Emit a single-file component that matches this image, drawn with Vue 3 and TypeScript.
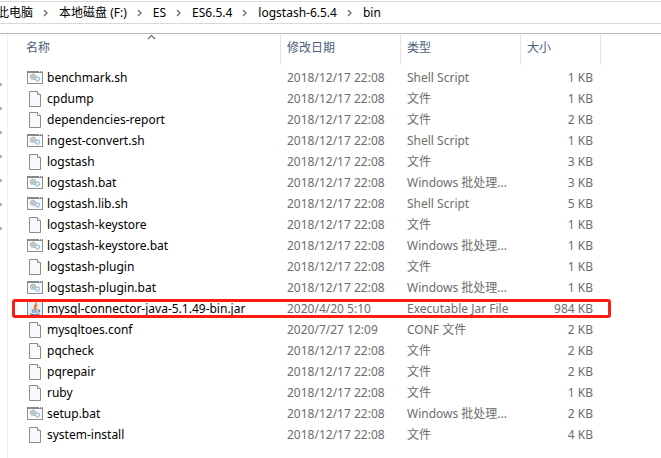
<script setup lang="ts">
import { ref } from 'vue'

type Kind = 'script' | 'file' | 'jar'

interface Entry {
  name: string
  date: string
  type: string
  size: string
  kind: Kind
}

const OLD = '2018/12/17 22:08'
const BATCH = 'Windows 批处理...'

const crumbs: string[] = ['此电脑', '本地磁盘 (F:)', 'ES', 'ES6.5.4', 'logstash-6.5.4', 'bin']

const marked = ref('mysql-connector-java-5.1.49-bin.jar')

const entries: Entry[] = [
  { name: 'benchmark.sh', date: OLD, type: 'Shell Script', size: '1 KB', kind: 'script' },
  { name: 'cpdump', date: OLD, type: '文件', size: '1 KB', kind: 'file' },
  { name: 'dependencies-report', date: OLD, type: '文件', size: '2 KB', kind: 'file' },
  { name: 'ingest-convert.sh', date: OLD, type: 'Shell Script', size: '1 KB', kind: 'script' },
  { name: 'logstash', date: OLD, type: '文件', size: '3 KB', kind: 'file' },
  { name: 'logstash.bat', date: OLD, type: BATCH, size: '3 KB', kind: 'script' },
  { name: 'logstash.lib.sh', date: OLD, type: 'Shell Script', size: '5 KB', kind: 'script' },
  { name: 'logstash-keystore', date: OLD, type: '文件', size: '1 KB', kind: 'file' },
  { name: 'logstash-keystore.bat', date: OLD, type: BATCH, size: '1 KB', kind: 'script' },
  { name: 'logstash-plugin', date: OLD, type: '文件', size: '1 KB', kind: 'file' },
  { name: 'logstash-plugin.bat', date: OLD, type: BATCH, size: '1 KB', kind: 'script' },
  { name: 'mysql-connector-java-5.1.49-bin.jar', date: '2020/4/20 5:10', type: 'Executable Jar File', size: '984 KB', kind: 'jar' },
  { name: 'mysqltoes.conf', date: '2020/7/27 12:09', type: 'CONF 文件', size: '2 KB', kind: 'file' },
  { name: 'pqcheck', date: OLD, type: '文件', size: '2 KB', kind: 'file' },
  { name: 'pqrepair', date: OLD, type: '文件', size: '2 KB', kind: 'file' },
  { name: 'ruby', date: OLD, type: '文件', size: '1 KB', kind: 'file' },
  { name: 'setup.bat', date: OLD, type: BATCH, size: '2 KB', kind: 'script' },
  { name: 'system-install', date: OLD, type: '文件', size: '4 KB', kind: 'file' },
]
</script>

<template>
  <div class="explorer">
    <nav class="address">
      <template v-for="(crumb, i) in crumbs" :key="crumb">
        <svg v-if="i > 0" class="chevron" viewBox="0 0 5 8" aria-hidden="true">
          <path d="M1 1 L4 4 L1 7" fill="none" stroke="#777" stroke-width="1.5" />
        </svg>
        <a href="#" class="crumb">{{ crumb }}</a>
      </template>
    </nav>

    <div class="content">
      <aside class="sidebar">
        <i v-for="n in 7" :key="n" class="pin"></i>
      </aside>

      <main class="files">
        <table>
          <colgroup>
            <col class="col-name" />
            <col class="col-date" />
            <col class="col-type" />
            <col class="col-size" />
            <col />
          </colgroup>
          <thead>
            <tr>
              <th class="first">
                <button type="button">名称</button>
                <svg class="sort" viewBox="0 0 9 6" aria-hidden="true">
                  <path d="M1 5 L4.5 1.5 L8 5" fill="none" stroke="#666" stroke-width="1.1" />
                </svg>
              </th>
              <th><button type="button">修改日期</button></th>
              <th><button type="button">类型</button></th>
              <th><button type="button">大小</button></th>
              <th class="rest"></th>
            </tr>
          </thead>
          <tbody>
            <tr v-for="e in entries" :key="e.name" :class="{ marked: e.name === marked }">
              <td class="name">
                <div class="label">
                  <svg v-if="e.kind === 'script'" class="icon" viewBox="0 0 16 16" aria-hidden="true">
                    <rect x="0.5" y="1.5" width="15" height="12" fill="#f8fafb" stroke="#8b8f92" />
                    <path d="M0 2 H16" stroke="#85898c" stroke-width="2" />
                    <path d="M12 1.5 H13 M14 1.5 H15" stroke="#fff" />
                    <circle cx="6" cy="6.8" r="2.4" fill="#e9ebec" stroke="#94989b" stroke-width="1.3" stroke-dasharray="1.3 0.6" />
                    <circle cx="6" cy="6.8" r="0.9" fill="#fff" stroke="#94989b" stroke-width="0.7" />
                    <circle cx="10.5" cy="9" r="2.1" fill="#d7edf8" stroke="#86b4d0" stroke-width="1.3" stroke-dasharray="1.2 0.5" />
                    <circle cx="10.5" cy="9" r="0.7" fill="#fff" />
                  </svg>
                  <svg v-else-if="e.kind === 'file'" class="icon" viewBox="0 0 16 16" aria-hidden="true">
                    <path d="M2.5 0.5 H10.5 L13.5 3.5 V15.5 H2.5 Z" fill="#f9f9f9" stroke="#8c8c8c" />
                    <path d="M10.5 0.5 V3.5 H13.5" fill="#fff" stroke="#8c8c8c" />
                  </svg>
                  <svg v-else class="icon" viewBox="0 0 16 16" aria-hidden="true">
                    <rect x="0.5" y="0.5" width="15" height="15" fill="#e8eef4" stroke="#8b9db0" />
                    <path d="M0.5 0 V16 M15.5 0 V16" stroke="#74899d" />
                    <path d="M8.8 1.5 C10 4 5.8 4.6 7.8 8 M10.5 3.8 C8 5 8.6 6 9.2 8" fill="none" stroke="#e8731c" stroke-width="1.3" />
                    <path d="M4.5 9 H10.5 M5 11 H10 M11 9 C13.5 8.5 12.5 11 10.8 11.3 M3 12.8 C5 14 10 14 12.5 12.8" fill="none" stroke="#4d7896" stroke-width="1.1" />
                  </svg>
                  <span>{{ e.name }}</span>
                </div>
              </td>
              <td>{{ e.date }}</td>
              <td>{{ e.type }}</td>
              <td class="size">{{ e.size }}</td>
              <td></td>
            </tr>
          </tbody>
        </table>
      </main>
    </div>
  </div>
</template>

<style>
body {
  background: #fff;
}
</style>

<style scoped>
.explorer {
  display: flex;
  flex-direction: column;
  min-height: 100vh;
  padding-top: 1px;
  box-sizing: border-box;
  overflow: hidden;
  font-family: "Noto Sans", "Noto Sans CJK SC", sans-serif;
  font-size: 12px;
  color: #000;
}

.address {
  display: flex;
  align-items: center;
  height: 21px;
  margin-left: -3px;
  border-top: 1px solid #d9d9d9;
  border-bottom: 1px solid #d9d9d9;
  white-space: nowrap;
}

.crumb {
  color: #000;
  text-decoration: none;
  line-height: 20px;
}

.chevron {
  flex: none;
  width: 5px;
  height: 8px;
  margin: 0 11px 0 10px;
}

.content {
  display: flex;
  flex: 1;
  margin-top: 9px;
  border-top: 1px solid #b9b9b9;
}

.sidebar {
  flex: none;
  display: flex;
  flex-direction: column;
  gap: 21px;
  width: 7px;
  padding-top: 49px;
  border-right: 1px solid #f0f0f0;
}

.pin {
  width: 2px;
  height: 3px;
  border-radius: 0 2px 2px 0;
  background: #9aa5ad;
}

.files {
  flex: 1;
  min-width: 0;
}

table {
  width: 100%;
  table-layout: fixed;
  border-collapse: separate;
  border-spacing: 0;
}

.col-name {
  width: 273px;
}

.col-date,
.col-type {
  width: 120px;
}

.col-size {
  width: 80px;
}

th {
  position: relative;
  height: 27px;
  padding: 0;
  border-right: 1px solid #e2e2e2;
  border-bottom: 6px solid #fff;
  text-align: left;
}

th.rest {
  border-right: 0;
}

th button {
  display: block;
  width: 100%;
  padding: 0 6px;
  border: 0;
  background: none;
  font: inherit;
  font-weight: 400;
  line-height: 20px;
  text-align: left;
  color: #4c607a;
}

th.first button {
  padding-left: 18px;
}

.sort {
  position: absolute;
  top: 0;
  left: 51%;
  width: 9px;
  height: 6px;
}

td {
  height: 21px;
  padding: 0 0 0 6px;
  line-height: 20px;
  white-space: nowrap;
  color: #6d6d6d;
}

td.name {
  padding-left: 19px;
  color: #000;
}

td.size {
  padding: 0 8px 0 0;
  text-align: right;
}

.label {
  display: flex;
  align-items: center;
  gap: 4px;
}

.icon {
  flex: none;
  width: 16px;
  height: 16px;
}

.marked {
  position: relative;
}

.marked .name::after {
  content: "";
  position: absolute;
  top: 1px;
  bottom: 1px;
  left: 4px;
  width: 599px;
  box-sizing: border-box;
  border: 3px solid #fc1d12;
  border-radius: 3px;
}
</style>
